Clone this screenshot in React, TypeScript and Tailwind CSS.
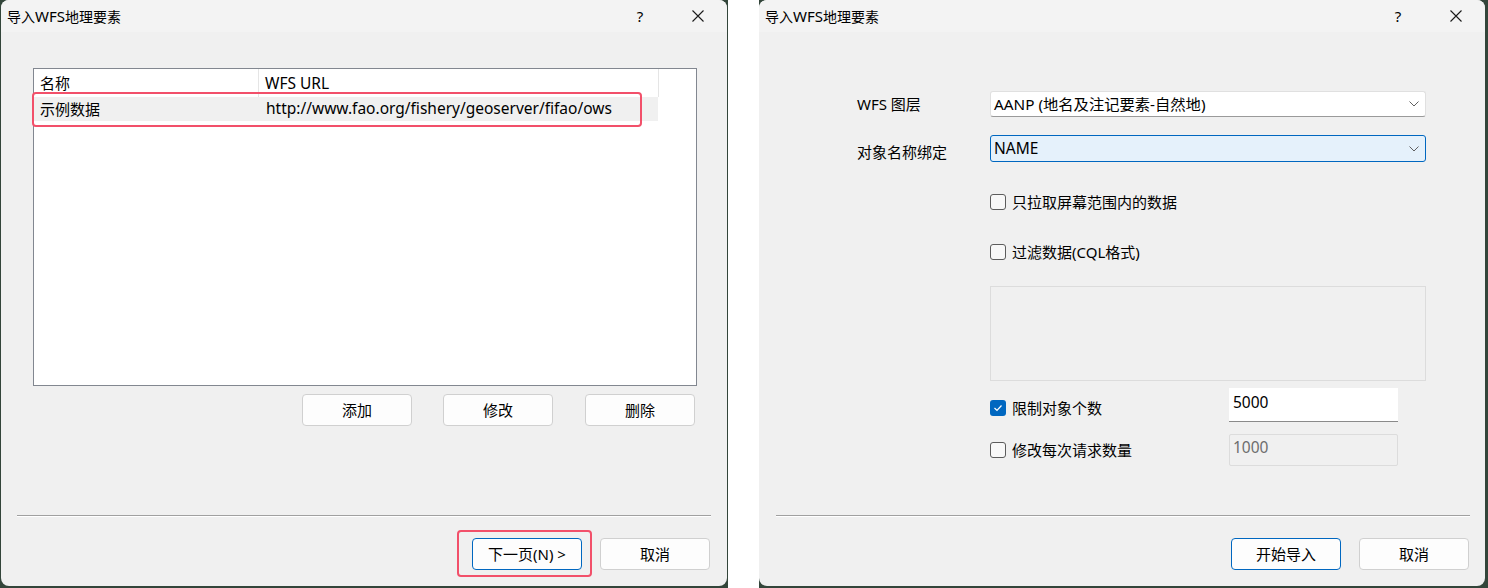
import React from "react";

const FONT = "font-['Noto_Sans','Noto_Sans_CJK_SC',sans-serif]";

function TitleBar() {
  return (
    <div className="flex h-[32px] shrink-0 items-center rounded-t-[8px] bg-[#f3f3f3]">
      <span className="pl-[6px] text-[14px] text-black">
        导入<span className="text-[15px]">WFS</span>地理要素
      </span>
      <div className="ml-auto flex h-full">
        <div className="flex w-[58px] items-center justify-center text-[15px] text-black">?</div>
        <div className="flex w-[58px] items-center justify-center">
          <svg width="12" height="12" viewBox="0 0 12 12">
            <path d="M0.5 0.5L11.5 11.5M11.5 0.5L0.5 11.5" stroke="#1a1a1a" strokeWidth="1.1" fill="none" />
          </svg>
        </div>
      </div>
    </div>
  );
}

function Separator({ className }: { className: string }) {
  return (
    <div className={className}>
      <div className="h-px bg-[#a0a0a0]" />
      <div className="h-px bg-white" />
    </div>
  );
}

function Chevron() {
  return (
    <svg width="10" height="6" viewBox="0 0 10 6">
      <path d="M0.5 0.5L5 5L9.5 0.5" stroke="#606060" strokeWidth="1" fill="none" />
    </svg>
  );
}

function CheckBox({ checked }: { checked?: boolean }) {
  if (checked) {
    return (
      <div className="flex h-[16px] w-[16px] items-center justify-center rounded-[3px] bg-[#0067c0]">
        <svg width="10" height="8" viewBox="0 0 10 8">
          <path d="M1.5 4L4 6.5L8.5 1.5" stroke="#fff" strokeWidth="1.2" fill="none" />
        </svg>
      </div>
    );
  }
  return <div className="h-[16px] w-[16px] rounded-[3px] border border-[#5c5c5c] bg-[#f8f8f8]" />;
}

function LeftDialog() {
  return (
    <div className="flex h-[586px] w-[726px] flex-col rounded-[8px] bg-[#f0f0f0]">
      <TitleBar />
      <div className="relative ml-[32px] mt-[36px] h-[318px] w-[664px] border border-[#828790] bg-white text-[15px] text-black">
        <div className="flex h-[28px] w-[625px] border-r border-[#e5e5e5]">
          <div className="flex w-[225px] items-center border-r border-[#e5e5e5] pl-[6px]">名称</div>
          <div className="flex items-center pl-[6px] pt-[2px] text-[15.5px]">WFS URL</div>
        </div>
        <div className="flex h-[24px] w-[624px] bg-[#f0f0f0]">
          <div className="flex w-[225px] items-center pl-[6px]">示例数据</div>
          <div className="flex items-center pl-[7px] text-[15.5px]">http://www.fao.org/fishery/geoserver/fifao/ows</div>
        </div>
        <div className="absolute left-[-2px] top-[23px] h-[35px] w-[610px] rounded-[4px] border-2 border-[#f2506a]" />
      </div>
      <div className="ml-[301px] mt-[8px] flex gap-[31px]">
        <div className="flex h-[32px] w-[110px] items-center justify-center rounded-[4px] border border-[#d0d0d0] bg-[#fdfdfd] text-[15px] text-black">添加</div>
        <div className="flex h-[32px] w-[110px] items-center justify-center rounded-[4px] border border-[#d0d0d0] bg-[#fdfdfd] text-[15px] text-black">修改</div>
        <div className="ml-px flex h-[32px] w-[110px] items-center justify-center rounded-[4px] border border-[#d0d0d0] bg-[#fdfdfd] text-[15px] text-black">删除</div>
      </div>
      <Separator className="ml-[16px] mt-[89px] w-[694px]" />
      <div className="mt-[21px] flex justify-end gap-[18px] pr-[17px]">
        <div className="relative">
          <div className="flex h-[32px] w-[110px] items-center justify-center rounded-[4px] border border-[#0067c0] bg-[#fdfdfd] text-[15px] text-black">下一页(N) &gt;</div>
          <div className="absolute left-[-15px] top-[-8px] h-[47px] w-[135px] rounded-[4px] border-2 border-[#f2506a]" />
        </div>
        <div className="flex h-[32px] w-[110px] items-center justify-center rounded-[4px] border border-[#d0d0d0] bg-[#fdfdfd] text-[15px] text-black">取消</div>
      </div>
    </div>
  );
}

function RightDialog() {
  return (
    <div className="flex h-[586px] w-[726px] flex-col rounded-[8px] bg-[#f0f0f0] text-[15px] text-black">
      <TitleBar />
      <div className="ml-[98px] mt-[59px] flex h-[26px] items-center">
        <div className="w-[133px]">WFS 图层</div>
        <div className="flex h-[26px] w-[436px] items-center justify-between rounded-[3px] border border-[#e0e0e0] border-b-[#9a9a9a] bg-white pl-[3px] pr-[6px]">
          <span className="text-[15.3px]">AANP (地名及注记要素-自然地)</span>
          <Chevron />
        </div>
      </div>
      <div className="ml-[98px] mt-[18px] flex h-[27px] items-start">
        <div className="mt-[7px] h-[20px] w-[133px] leading-[20px]">对象名称绑定</div>
        <div className="flex h-[27px] w-[436px] items-center justify-between rounded-[3px] border border-[#0067c0] bg-[#e5f1fb] pl-[3px] pr-[6px]">
          <span className="text-[15.5px]">NAME</span>
          <Chevron />
        </div>
      </div>
      <div className="ml-[231px] mt-[29px] flex h-[22px] items-center gap-[6px]">
        <CheckBox />
        <span>只拉取屏幕范围内的数据</span>
      </div>
      <div className="ml-[231px] mt-[28px] flex h-[22px] items-center gap-[6px]">
        <CheckBox />
        <span>过滤数据(CQL格式)</span>
      </div>
      <div className="ml-[231px] mt-[23px] h-[95px] w-[436px] border border-[#dcdcdc] bg-[#f0f0f0]" />
      <div className="ml-[231px] mt-[7px] flex h-[34px] items-start">
        <div className="mt-[9px] flex h-[22px] w-[239px] items-center gap-[6px]">
          <CheckBox checked />
          <span>限制对象个数</span>
        </div>
        <div className="flex h-[34px] w-[169px] items-start border-b border-[#8a8a8a] bg-white pl-[4px] pt-[3px] text-[15.5px]">5000</div>
      </div>
      <div className="ml-[231px] mt-[12px] flex h-[32px] items-start">
        <div className="mt-[5px] flex h-[22px] w-[239px] items-center gap-[6px]">
          <CheckBox />
          <span>修改每次请求数量</span>
        </div>
        <div className="flex h-[32px] w-[169px] items-start rounded-[2px] border border-[#dcdcdc] bg-[#f0f0f0] pl-[3px] pt-[1px] text-[15.5px] text-[#6d6d6d]">1000</div>
      </div>
      <Separator className="ml-[17px] mt-[49px] w-[694px]" />
      <div className="mt-[21px] flex justify-end gap-[18px] pr-[16px]">
        <div className="flex h-[32px] w-[110px] items-center justify-center rounded-[4px] border border-[#0067c0] bg-[#fdfdfd] text-[15px] text-black">开始导入</div>
        <div className="flex h-[32px] w-[110px] items-center justify-center rounded-[4px] border border-[#d0d0d0] bg-[#fdfdfd] text-[15px] text-black">取消</div>
      </div>
    </div>
  );
}

export default function App() {
  return (
    <div className={`flex h-[588px] w-[1488px] bg-white ${FONT}`}>
      <div className="h-full w-[728px] bg-[#33453a] pl-px">
        <LeftDialog />
      </div>
      <div className="w-[31px]" />
      <div className="h-full w-[729px] bg-[#33453a]">
        <RightDialog />
      </div>
    </div>
  );
}
